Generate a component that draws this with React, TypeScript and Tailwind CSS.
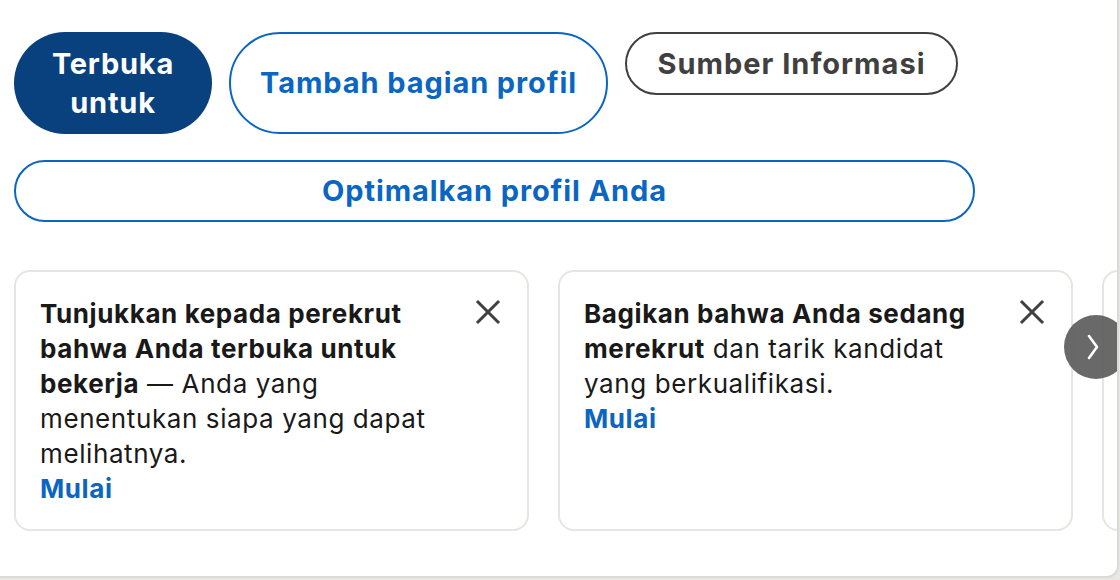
import React from "react";

function CloseIcon() {
  return (
    <svg width="26" height="26" viewBox="0 0 26 26" fill="none">
      <path d="M3 3L23 23M23 3L3 23" stroke="#404040" strokeWidth="3" strokeLinecap="square" />
    </svg>
  );
}

export default function App() {
  return (
    <div
      className="w-[1120px] h-[580px] bg-[#e9e7e3] overflow-hidden"
      style={{ fontFamily: "Inter, 'Noto Sans', sans-serif" }}
    >
      <div className="w-[1119px] h-[578px] bg-white border-r-2 border-b-2 border-[#dcdad6] rounded-br-[12px] overflow-hidden relative">
        <div className="pl-[14px] pt-[32px]">
          <div className="flex items-start gap-[17px]">
            <button className="w-[198px] h-[102px] rounded-full bg-[#09417f] text-white text-[29px] font-bold tracking-[0.8px] leading-[39px] flex flex-col items-center justify-center">
              <span>Terbuka</span>
              <span>untuk</span>
            </button>
            <button className="w-[379px] h-[102px] rounded-full border-2 border-[#0a66c2] text-[#0a66c2] text-[29px] font-bold tracking-[0.9px] flex items-center justify-center">
              Tambah bagian profil
            </button>
            <button className="w-[333px] h-[63px] rounded-full border-2 border-[#404040] text-[#404040] text-[29px] font-bold tracking-[1px] flex items-center justify-center">
              Sumber Informasi
            </button>
          </div>
          <button className="mt-[26px] w-[961px] h-[62px] rounded-full border-2 border-[#0a66c2] text-[#0a66c2] text-[29px] font-bold tracking-[0.9px] flex items-center justify-center">
            Optimalkan profil Anda
          </button>
          <div className="mt-[48px] flex gap-[29px]">
            <div className="w-[515px] h-[261px] shrink-0 rounded-[16px] border-2 border-[#e6e5e2] pl-[24px] pr-[24px] pt-[24px] flex">
              <p className="w-[410px] text-[26px] leading-[35px] tracking-[0.6px] text-[#191919]">
                <span className="font-bold">Tunjukkan kepada perekrut bahwa Anda terbuka untuk bekerja</span> — Anda yang menentukan siapa yang dapat melihatnya.
                <br />
                <span className="font-bold text-[#0a66c2]">Mulai</span>
              </p>
              <div className="ml-auto mt-[3px] mr-[2px]">
                <CloseIcon />
              </div>
            </div>
            <div className="w-[515px] h-[261px] shrink-0 rounded-[16px] border-2 border-[#e6e5e2] pl-[24px] pr-[24px] pt-[24px] flex">
              <p className="w-[410px] text-[26px] leading-[35px] tracking-[0.6px] text-[#191919]">
                <span className="font-bold">Bagikan bahwa Anda sedang merekrut</span> dan tarik kandidat yang berkualifikasi.
                <br />
                <span className="font-bold text-[#0a66c2]">Mulai</span>
              </p>
              <div className="ml-auto mt-[3px] mr-[2px]">
                <CloseIcon />
              </div>
            </div>
            <div className="w-[515px] h-[261px] shrink-0 rounded-[16px] border-2 border-[#e6e5e2]" />
          </div>
        </div>
        <div className="absolute left-[1064px] top-[315px] w-[64px] h-[64px] rounded-full bg-[#595959]/90 flex items-center justify-center pr-[6px]">
          <svg width="18" height="30" viewBox="0 0 18 30" fill="none">
            <path d="M5 4L13 15L5 26" stroke="white" strokeWidth="2.6" strokeLinecap="round" strokeLinejoin="round" />
          </svg>
        </div>
      </div>
    </div>
  );
}
